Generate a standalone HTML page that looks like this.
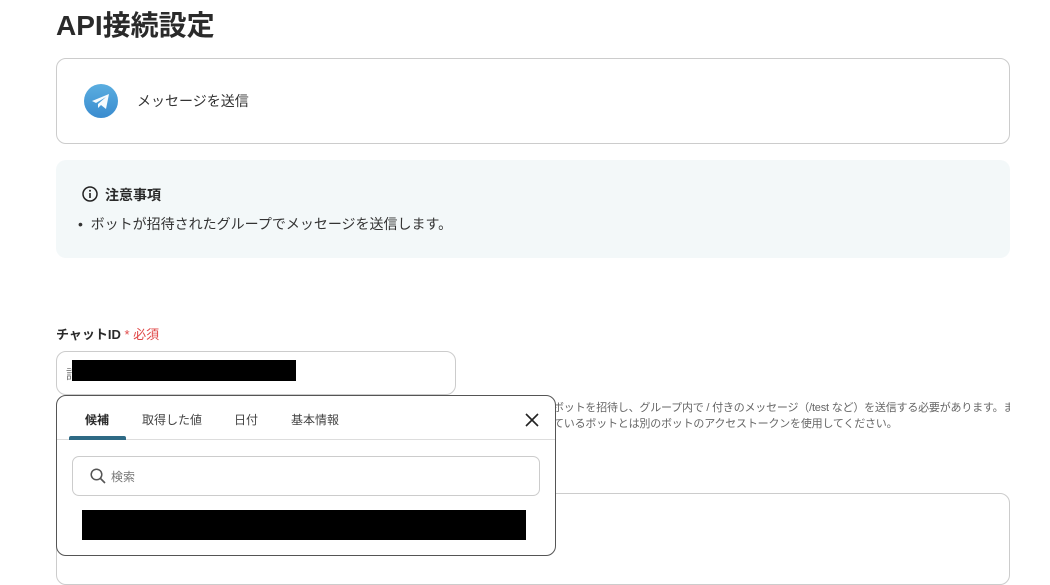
<!DOCTYPE html>
<html><head><meta charset="utf-8"><style>
body{margin:0;width:1050px;height:566px;overflow:hidden;background:#fff;font-family:"Liberation Sans","Noto Sans CJK JP",sans-serif;color:#222;position:relative}
.a{position:absolute}
</style></head><body>
<div class="a" style="left:56px;top:4px;font-size:28px;font-weight:bold;color:#2a2a2a">API接続設定</div>
<div class="a" style="left:56px;top:58px;width:952px;height:84px;border:1px solid #ccc;border-radius:10px"></div>
<svg class="a" style="left:84px;top:84px" width="34" height="34" viewBox="0 0 34 34"><defs><linearGradient id="g" x1="0" y1="0" x2="0" y2="1"><stop offset="0" stop-color="#5aaee0"/><stop offset="1" stop-color="#3a8ccf"/></linearGradient></defs><circle cx="17" cy="17" r="17" fill="url(#g)"/><path d="M8 17 L25 10 L22 25 L17 21 L14 24 L14 20 L22 13 L12 19 Z" fill="#fff" opacity="0.95"/></svg>
<div class="a" style="left:137px;top:91px;font-size:14px;color:#333">メッセージを送信</div>
<div class="a" style="left:56px;top:160px;width:954px;height:98px;background:#f3f8f9;border-radius:10px"></div>
<svg class="a" style="left:82px;top:186px" width="16" height="16" viewBox="0 0 16 16"><circle cx="8" cy="8" r="7" fill="none" stroke="#222" stroke-width="1.5"/><rect x="7.2" y="7" width="1.6" height="5" fill="#222"/><circle cx="8" cy="4.8" r="1" fill="#222"/></svg>
<div class="a" style="left:105px;top:185px;font-size:14px;font-weight:bold;color:#2a2a2a">注意事項</div>
<div class="a" style="left:78px;top:214px;font-size:14px;color:#333">•&nbsp; ボットが招待されたグループでメッセージを送信します。</div>
<div class="a" style="left:56px;top:324px;font-size:13px;font-weight:bold;color:#2a2a2a">チャットID <span style="color:#e04848;font-weight:normal">* 必須</span></div>
<div class="a" style="left:56px;top:351px;width:398px;height:42px;border:1px solid #ccc;border-radius:10px"></div>
<div class="a" style="left:66px;top:364px;font-size:13px;color:#777">請</div>
<div class="a" style="left:72px;top:360px;width:224px;height:21px;background:#000"></div>
<div class="a" style="left:553px;top:400px;width:457px;overflow:hidden;white-space:nowrap;font-size:11px;line-height:16px;color:#666;letter-spacing:-0.2px">ボットを招待し、グループ内で / 付きのメッセージ（/test など）を送信する必要があります。ま<br>ているボットとは別のボットのアクセストークンを使用してください。</div>
<div class="a" style="left:56px;top:493px;width:952px;height:90px;border:1px solid #ccc;border-radius:10px"></div>
<div class="a" style="left:56px;top:395px;width:498px;height:159px;border:1px solid #555;border-radius:10px;background:#fff;overflow:hidden">
 <div class="a" style="left:0;top:43px;width:498px;height:1px;background:#ddd"></div>
 <div class="a" style="left:12px;top:40px;width:57px;height:4px;background:#2e6a85;border-radius:2px 2px 0 0"></div>
 <div class="a" style="left:28px;top:15px;font-size:12px;font-weight:bold;color:#2a2a2a">候補</div>
 <div class="a" style="left:85px;top:15px;font-size:12px;color:#444">取得した値</div>
 <div class="a" style="left:177px;top:15px;font-size:12px;color:#444">日付</div>
 <div class="a" style="left:234px;top:15px;font-size:12px;color:#444">基本情報</div>
 <svg class="a" style="left:468px;top:17px" width="14" height="14" viewBox="0 0 14 14"><path d="M1 1L13 13M13 1L1 13" stroke="#222" stroke-width="1.6"/></svg>
 <div class="a" style="left:15px;top:60px;width:466px;height:38px;border:1px solid #ccc;border-radius:7px"></div>
 <svg class="a" style="left:33px;top:72px" width="16" height="16" viewBox="0 0 16 16"><circle cx="6.5" cy="6.5" r="5.3" fill="none" stroke="#555" stroke-width="1.5"/><path d="M10.5 10.5L15 15" stroke="#555" stroke-width="1.6"/></svg>
 <div class="a" style="left:54px;top:72px;font-size:12px;color:#777">検索</div>
 <div class="a" style="left:25px;top:114px;width:444px;height:30px;background:#000"></div>
</div>
</body></html>
